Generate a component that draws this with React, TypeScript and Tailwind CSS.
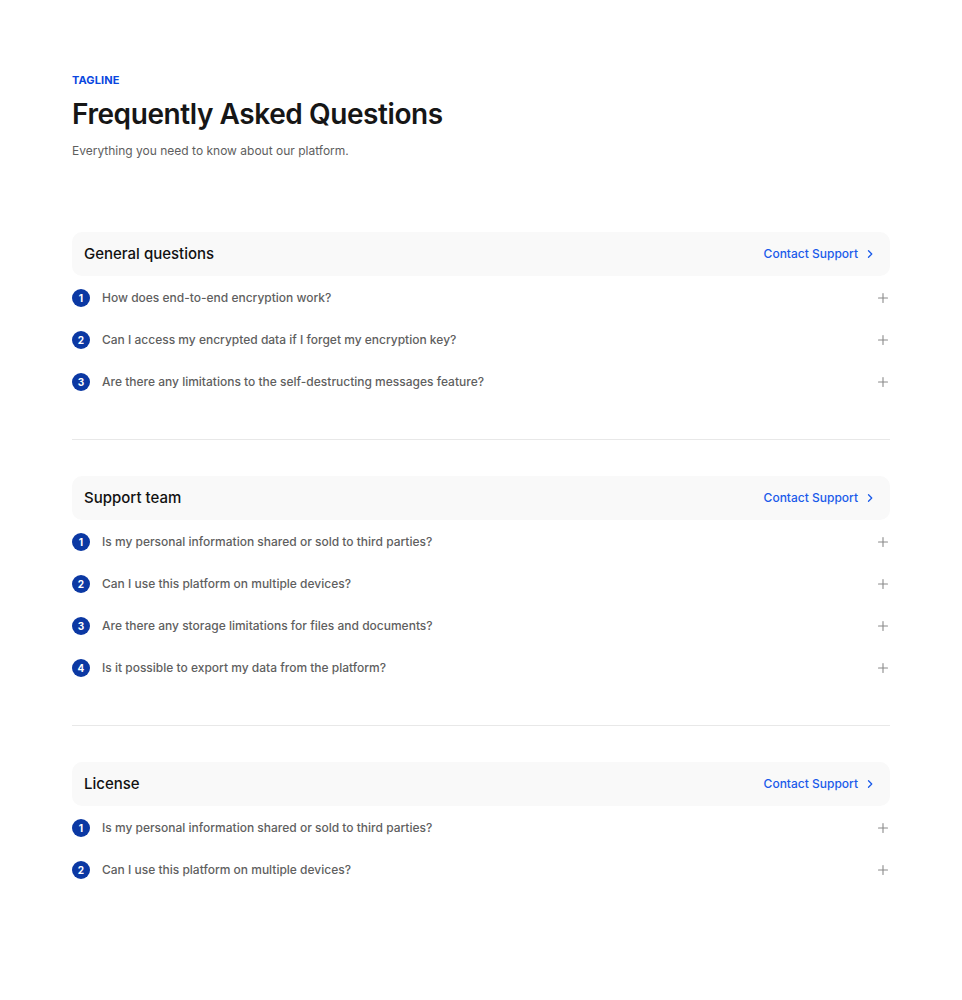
import React from "react";

const sections = [
  {
    title: "General questions",
    items: [
      "How does end-to-end encryption work?",
      "Can I access my encrypted data if I forget my encryption key?",
      "Are there any limitations to the self-destructing messages feature?",
    ],
  },
  {
    title: "Support team",
    items: [
      "Is my personal information shared or sold to third parties?",
      "Can I use this platform on multiple devices?",
      "Are there any storage limitations for files and documents?",
      "Is it possible to export my data from the platform?",
    ],
  },
  {
    title: "License",
    items: [
      "Is my personal information shared or sold to third parties?",
      "Can I use this platform on multiple devices?",
    ],
  },
];

function Chevron() {
  return (
    <svg width="12" height="12" viewBox="0 0 12 12" fill="none" stroke="currentColor" strokeWidth="1.3" strokeLinecap="round" strokeLinejoin="round">
      <path d="M4.5 2.75 7.75 6 4.5 9.25" />
    </svg>
  );
}

function Plus() {
  return (
    <svg width="12" height="12" viewBox="0 0 12 12" fill="none" stroke="currentColor" strokeWidth="1.1" strokeLinecap="round">
      <path d="M6 1.5v9M1.5 6h9" />
    </svg>
  );
}

export default function App() {
  return (
    <div className="min-h-screen bg-white" style={{ fontFamily: "Inter, 'Noto Sans', sans-serif" }}>
      <div className="px-[72px] pt-[73px]">
        <div className="text-[11px] font-bold leading-[14px] tracking-[0.01em] text-[#0a47e0]">TAGLINE</div>
        <h1 className="mt-[10px] text-[28px] font-semibold leading-[34px] tracking-[-0.015em] text-[#161616]">
          Frequently Asked Questions
        </h1>
        <p className="mt-[11px] text-[12px] leading-[18px] text-[#5e5e5e]">Everything you need to know about our platform.</p>

        <div className="mt-[72px]">
          {sections.map((s, si) => (
            <div key={si} className={si < sections.length - 1 ? "border-b border-[#e8e8e8] pb-[36px] mb-[36px]" : ""}>
              <div className="flex h-[44px] items-center justify-between rounded-[10px] bg-[#f9f9f9] pl-[12px] pr-[14px]">
                <span className="text-[15px] font-medium text-[#111]">{s.title}</span>
                <span className="flex items-center gap-[6px] text-[12px] font-medium text-[#1a5bea]">
                  Contact Support
                  <Chevron />
                </span>
              </div>
              <div className="pt-[1px]">
                {s.items.map((q, qi) => (
                  <div key={qi} className="flex h-[42px] items-center">
                    <span className="flex h-[18px] w-[18px] items-center justify-center rounded-full bg-[#0b38a3] text-[10px] font-bold text-white">
                      {qi + 1}
                    </span>
                    <span className="ml-[12px] flex-1 text-[12px] font-medium text-[#5f5f5f]">{q}</span>
                    <span className="mr-[1px] text-[#8a8a8a]">
                      <Plus />
                    </span>
                  </div>
                ))}
              </div>
            </div>
          ))}
        </div>
      </div>
    </div>
  );
}
